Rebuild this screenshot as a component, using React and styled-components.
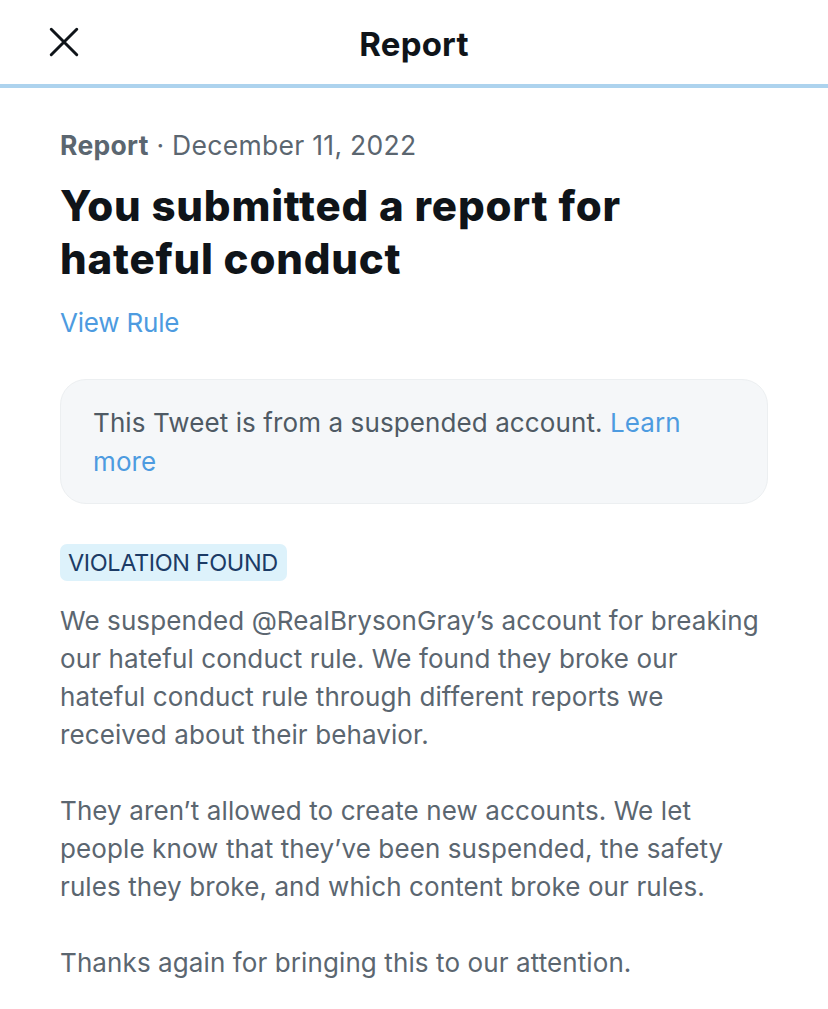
import React from "react";
import styled, { createGlobalStyle } from "styled-components";

const Global = createGlobalStyle`
  html, body { margin: 0; padding: 0; background: #ffffff; }
  body { font-family: Inter, "Noto Sans", "Liberation Sans", sans-serif; -webkit-font-smoothing: antialiased; }
`;

const Page = styled.div`
  width: 828px;
  min-height: 1009px;
  background: #ffffff;
  display: flex;
  flex-direction: column;
`;

const TopBar = styled.header`
  height: 84px;
  display: grid;
  grid-template-columns: 110px 1fr 110px;
  align-items: center;
  border-bottom: 4px solid #add3ee;
  box-sizing: content-box;
`;

const CloseButton = styled.button`
  border: none;
  background: none;
  padding: 0;
  margin-left: 46px;
  width: 36px;
  height: 36px;
  display: flex;
  align-items: center;
  justify-content: center;
  color: #0f1419;
  cursor: pointer;
`;

const Title = styled.h1`
  margin: 0;
  text-align: center;
  font-size: 33px;
  font-weight: 700;
  color: #0f1419;
  letter-spacing: 0.2px;
  padding-top: 4px;
`;

const Content = styled.main`
  padding: 39px 60px 0 60px;
  display: flex;
  flex-direction: column;
`;

const Meta = styled.div`
  font-size: 26.5px;
  line-height: 36px;
  color: #5b6670;
  letter-spacing: 0.3px;
`;

const MetaStrong = styled.span`
  font-weight: 700;
`;

const Heading = styled.h2`
  margin: 16px 0 0 0;
  font-size: 42px;
  line-height: 53px;
  font-weight: 800;
  color: #0f1419;
  letter-spacing: 0.8px;
`;

const Link = styled.a`
  color: #4d9be0;
  text-decoration: none;
  cursor: pointer;
`;

const RuleLink = styled(Link)`
  display: block;
  margin-top: 20px;
  font-size: 26px;
  line-height: 36px;
  letter-spacing: -0.2px;
`;

const Notice = styled.div`
  margin-top: 38px;
  width: 708px;
  box-sizing: border-box;
  background: #f5f7f9;
  border: 1.5px solid #eceff1;
  border-radius: 26px;
  padding: 23px 40px 22px 32px;
  font-size: 26px;
  line-height: 39px;
  color: #4f5a64;
  letter-spacing: 0.1px;
`;

const Badge = styled.span`
  align-self: flex-start;
  margin-top: 40px;
  background: #ddf2fb;
  color: #1b3b66;
  font-size: 23.5px;
  line-height: 37px;
  padding: 0 9px 0 8px;
  border-radius: 7px;
  letter-spacing: -0.4px;
`;

const Paragraph = styled.p`
  margin: ${(p) => (p.$first ? "21px" : "38px")} 0 0 0;
  font-size: 26px;
  line-height: 38px;
  color: #5b6670;
  letter-spacing: 0.1px;
`;

export default function App() {
  return (
    <Page>
      <Global />
      <TopBar>
        <CloseButton aria-label="Close">
          <svg width="34" height="34" viewBox="0 0 24 24" fill="none" stroke="currentColor" strokeWidth="2.1" strokeLinecap="round">
            <path d="M3 3 L21 21 M21 3 L3 21" />
          </svg>
        </CloseButton>
        <Title>Report</Title>
        <div />
      </TopBar>
      <Content>
        <Meta>
          <MetaStrong>Report</MetaStrong> · December 11, 2022
        </Meta>
        <Heading>
          You submitted a report for
          <br />
          hateful conduct
        </Heading>
        <RuleLink>View Rule</RuleLink>
        <Notice>
          This Tweet is from a suspended account. <Link>Learn more</Link>
        </Notice>
        <Badge>VIOLATION FOUND</Badge>
        <Paragraph $first>
          We suspended @RealBrysonGray’s account for breaking our hateful conduct rule. We found they broke our hateful conduct rule through different reports we received about their behavior.
        </Paragraph>
        <Paragraph>
          They aren’t allowed to create new accounts. We let people know that they’ve been suspended, the safety rules they broke, and which content broke our rules.
        </Paragraph>
        <Paragraph>Thanks again for bringing this to our attention.</Paragraph>
      </Content>
    </Page>
  );
}
